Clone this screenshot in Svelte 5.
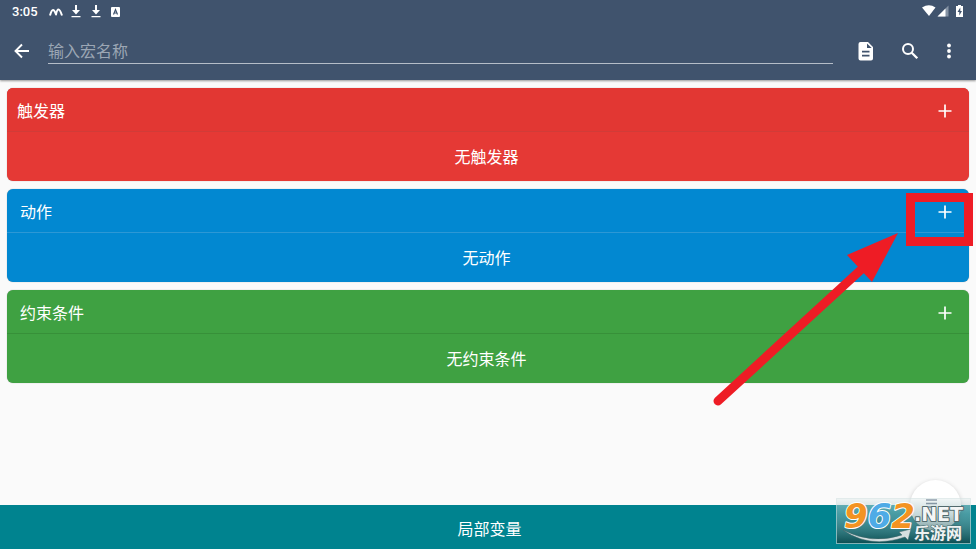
<script>
  let macroName = $state('');

  const sections = [
    { id: 'triggers', title: '触发器', empty: '无触发器' },
    { id: 'actions', title: '动作', empty: '无动作', highlighted: true },
    { id: 'constraints', title: '约束条件', empty: '无约束条件' }
  ];
</script>

<div class="screen">
  <header>
    <div class="status-bar">
      <span class="time">3:05</span>
      <svg class="wave" width="14" height="10" viewBox="0 0 14 10">
        <path d="M1 8.500Q2.500 3 4 3T7 7.500Q8 2.500 9.500 2.500T13 8.500" />
      </svg>
      {#each [1, 2] as n (n)}
        <svg class="download" width="10" height="14" viewBox="0 0 10 14">
          <path d="M4 0h2v5h3L5 9.500 1 5h3zM0.500 11h9v1.300h-9z" />
        </svg>
      {/each}
      <svg class="letter" width="10" height="10" viewBox="0 0 10 10">
        <rect width="9" height="10" rx="1" fill="#fff" />
        <path d="M2.500 7.500 4.500 2.500 6.500 7.500M3.200 6h2.600" fill="none" stroke="#40536d" stroke-width="1.200" />
      </svg>
      <span class="spacer"></span>
      <svg width="42" height="14" viewBox="0 0 42 14">
        <path d="M0 2.500Q7 -2 13.500 2.500L7 11z" fill="#fff" />
        <path d="M15.500 11.500 26.500 0.500V11.500z" fill="#8593a5" />
        <path d="M15.500 11.500 23.500 3.500V11.500z" fill="#fff" />
        <path d="M36 0h3v1h2v11h-7V1h2z" fill="#fff" />
        <path d="M38.300 2.500 35.500 7h1.800v3.500L40 6h-1.700z" fill="#40536d" />
      </svg>
    </div>
    <div class="toolbar">
      <button class="icon back" aria-label="返回">
        <svg width="16" height="16" viewBox="0 0 16 16">
          <path d="M15 8H2M8 1.500 1.500 8 8 14.500" fill="none" stroke="#fff" stroke-width="1.900" />
        </svg>
      </button>
      <input type="text" aria-label="输入宏名称" placeholder="输入宏名称" bind:value={macroName} />
      <button class="icon doc" aria-label="文档">
        <svg width="16" height="20" viewBox="0 0 16 20">
          <path fill-rule="evenodd" d="M2.500 1H10L15 6V17.500Q15 19.500 13 19.500H2.500Q0.500 19.500 0.500 17.500V3Q0.500 1 2.500 1zM9 2.400V7h4.700zM4 9.800v1.700h7.500V9.800zM4 13.700v1.700h7.500v-1.700z" fill="#fff" />
        </svg>
      </button>
      <button class="icon search" aria-label="搜索">
        <svg width="18" height="18" viewBox="0 0 18 18">
          <circle cx="7" cy="7" r="5" fill="none" stroke="#fff" stroke-width="2" />
          <path d="M10.700 10.700 16.300 16.300" stroke="#fff" stroke-width="2.300" />
        </svg>
      </button>
      <button class="icon more" aria-label="更多">
        <svg width="4" height="16" viewBox="0 0 4 16">
          <circle cx="2" cy="2.500" r="1.900" />
          <circle cx="2" cy="8" r="1.900" />
          <circle cx="2" cy="13.500" r="1.900" />
        </svg>
      </button>
    </div>
  </header>

  <main>
    {#each sections as section (section.id)}
      <section class="card {section.id}">
        <div class="card-header">
          <h2>{section.title}</h2>
          <button class="icon" aria-label="添加{section.title}">
            <svg width="14" height="14" viewBox="0 0 14 14">
              <path d="M7 0.500v13M0.500 7h13" stroke="#fff" stroke-width="1.700" />
            </svg>
          </button>
        </div>
        <p>{section.empty}</p>
        {#if section.highlighted}
          <div class="frame"></div>
          <svg class="arrow" width="190" height="180" viewBox="0 0 190 180">
            <path d="M8 170 154 36" stroke="#ee1c25" stroke-width="9" stroke-linecap="round" />
            <path d="M188 2 162 51 137 24z" fill="#ee1c25" />
          </svg>
        {/if}
      </section>
    {/each}
  </main>

  <footer>
    <button class="variables">局部变量</button>
    <button class="fab" aria-label="菜单">
      <svg width="12" height="10" viewBox="0 0 12 10">
        <path d="M0 1h11M0 4.500h11M0 8h7" stroke="#40536d" stroke-width="1.400" />
      </svg>
    </button>
    <svg class="watermark" width="135" height="46" viewBox="0 0 135 46">
      <defs>
        <linearGradient id="shade" x1="0" y1="0" x2="0" y2="1">
          <stop offset="0" stop-color="#e4eeee" stop-opacity="0.500" />
          <stop offset="0.350" stop-color="#8fb3b6" stop-opacity="0.500" />
          <stop offset="1" stop-color="#0d4548" stop-opacity="0.850" />
        </linearGradient>
      </defs>
      <rect x="0.500" y="0.500" width="134" height="45" fill="url(#shade)" stroke="#d5e2e3" stroke-opacity="0.600" />
      <path d="M7 32Q36 47 66 37L63 34 75 31 72 42 69 39Q34 51 7 32z" fill="#d6dfe0" stroke="#45686b" stroke-width="0.500" />
      <text class="digits" x="8" y="30"><tspan fill="#f39322">9</tspan><tspan fill="#4fabe6">6</tspan><tspan fill="#f39322">2</tspan></text>
      <text class="net" x="78" y="23">.NET</text>
      <text class="site" x="78" y="41">乐游网</text>
    </svg>
  </footer>
</div>

<style>
  :global(body) {
    margin: 0;
    background: #fafafa;
  }

  .screen {
    display: flex;
    flex-direction: column;
    min-height: 100vh;
    font-family: Roboto, "Noto Sans CJK SC", sans-serif;
    font-size: 16px;
    color: #fff;
    background: #fafafa;
    overflow: hidden;
  }

  button {
    border: 0;
    padding: 0;
    background: none;
    color: inherit;
    font: inherit;
    cursor: pointer;
  }

  svg {
    display: block;
    flex: none;
  }

  header {
    background: #40536d;
    box-shadow: 0 1px 2px rgba(0, 0, 0, 0.4);
    padding-bottom: 8px;
  }

  .status-bar {
    display: flex;
    align-items: center;
    height: 23px;
    padding: 0 12px;
    font-size: 13px;
    font-weight: 500;
  }

  .wave {
    margin-left: 11px;
    fill: none;
    stroke: #fff;
    stroke-width: 2;
    stroke-linejoin: round;
  }

  .download {
    margin-left: 10px;
    fill: #fff;
  }

  .wave + .download {
    margin-left: 8px;
  }

  .letter {
    margin-left: 10px;
  }

  .spacer {
    flex: 1;
  }

  .toolbar {
    display: flex;
    align-items: center;
    height: 49px;
    padding: 7px 25px 0 14px;
    box-sizing: border-box;
  }

  .toolbar input {
    flex: 1;
    min-width: 0;
    height: 26px;
    margin-left: 18px;
    padding: 2px 0 0;
    box-sizing: border-box;
    border: 0;
    border-bottom: 1px solid #b5bdc8;
    outline: none;
    background: none;
    color: #fff;
    font: inherit;
  }

  .toolbar input::placeholder {
    color: #9ba6b4;
    opacity: 1;
  }

  .doc {
    margin-left: 25px;
  }

  .search {
    margin-left: 27px;
  }

  .more {
    margin-left: 28px;
    fill: #fff;
  }

  main {
    flex: 1;
    display: flex;
    flex-direction: column;
    gap: 8px;
    padding: 8px 7px;
  }

  .card {
    position: relative;
    border-radius: 6px;
    box-shadow: 0 0 1px rgba(0, 0, 0, 0.4);
  }

  .triggers {
    background: #e53935;
  }

  .triggers .card-header {
    padding-left: 10px;
    background: #e23733;
    border-bottom-color: #d13c38;
  }

  .actions {
    background: #0288d1;
    z-index: 1;
  }

  .actions .card-header {
    border-bottom-color: #2d98d5;
  }

  .constraints {
    background: #3fa142;
  }

  .card-header {
    display: flex;
    align-items: center;
    justify-content: space-between;
    height: 44px;
    padding: 3px 17px 0 13px;
    box-sizing: border-box;
    border-bottom: 1px solid #379039;
    border-radius: 6px 6px 0 0;
  }

  h2 {
    margin: 0;
    padding-top: 1px;
    font-size: 16px;
    font-weight: 400;
    line-height: 24px;
  }

  p {
    margin: 0;
    padding: 14px 3px 11px 0;
    line-height: 24px;
    text-align: center;
  }

  .frame {
    position: absolute;
    top: 4px;
    right: -4px;
    width: 67px;
    height: 53px;
    box-sizing: border-box;
    border: 9px solid #ee1c25;
  }

  .arrow {
    position: absolute;
    top: 42px;
    right: 69px;
    fill: none;
    pointer-events: none;
  }

  footer {
    position: relative;
    background: #00838f;
  }

  .variables {
    display: block;
    width: 100%;
    height: 44px;
    padding: 2px 0 0 3px;
  }

  .fab {
    position: absolute;
    right: 15px;
    bottom: 18px;
    display: flex;
    align-items: center;
    justify-content: center;
    width: 51px;
    height: 51px;
    padding: 0 8px 4px 0;
    border-radius: 50%;
    background: #fff;
    box-shadow: 0 2px 5px rgba(0, 0, 0, 0.25);
  }

  .watermark {
    position: absolute;
    right: 5px;
    bottom: 5px;
    overflow: visible;
    pointer-events: none;
  }

  .watermark text {
    paint-order: stroke;
    stroke-linejoin: round;
  }

  .digits {
    font: italic bold 34px "DejaVu Sans", sans-serif;
    stroke: #fff;
    stroke-width: 2px;
  }

  .net {
    font: bold 19px "DejaVu Sans", sans-serif;
    fill: #f4f6f6;
    stroke: #526a6d;
    stroke-width: 2px;
  }

  .site {
    font: bold 16px "Noto Sans CJK SC", sans-serif;
    fill: #eef3f3;
    stroke: #3f6568;
    stroke-width: 1px;
  }
</style>
